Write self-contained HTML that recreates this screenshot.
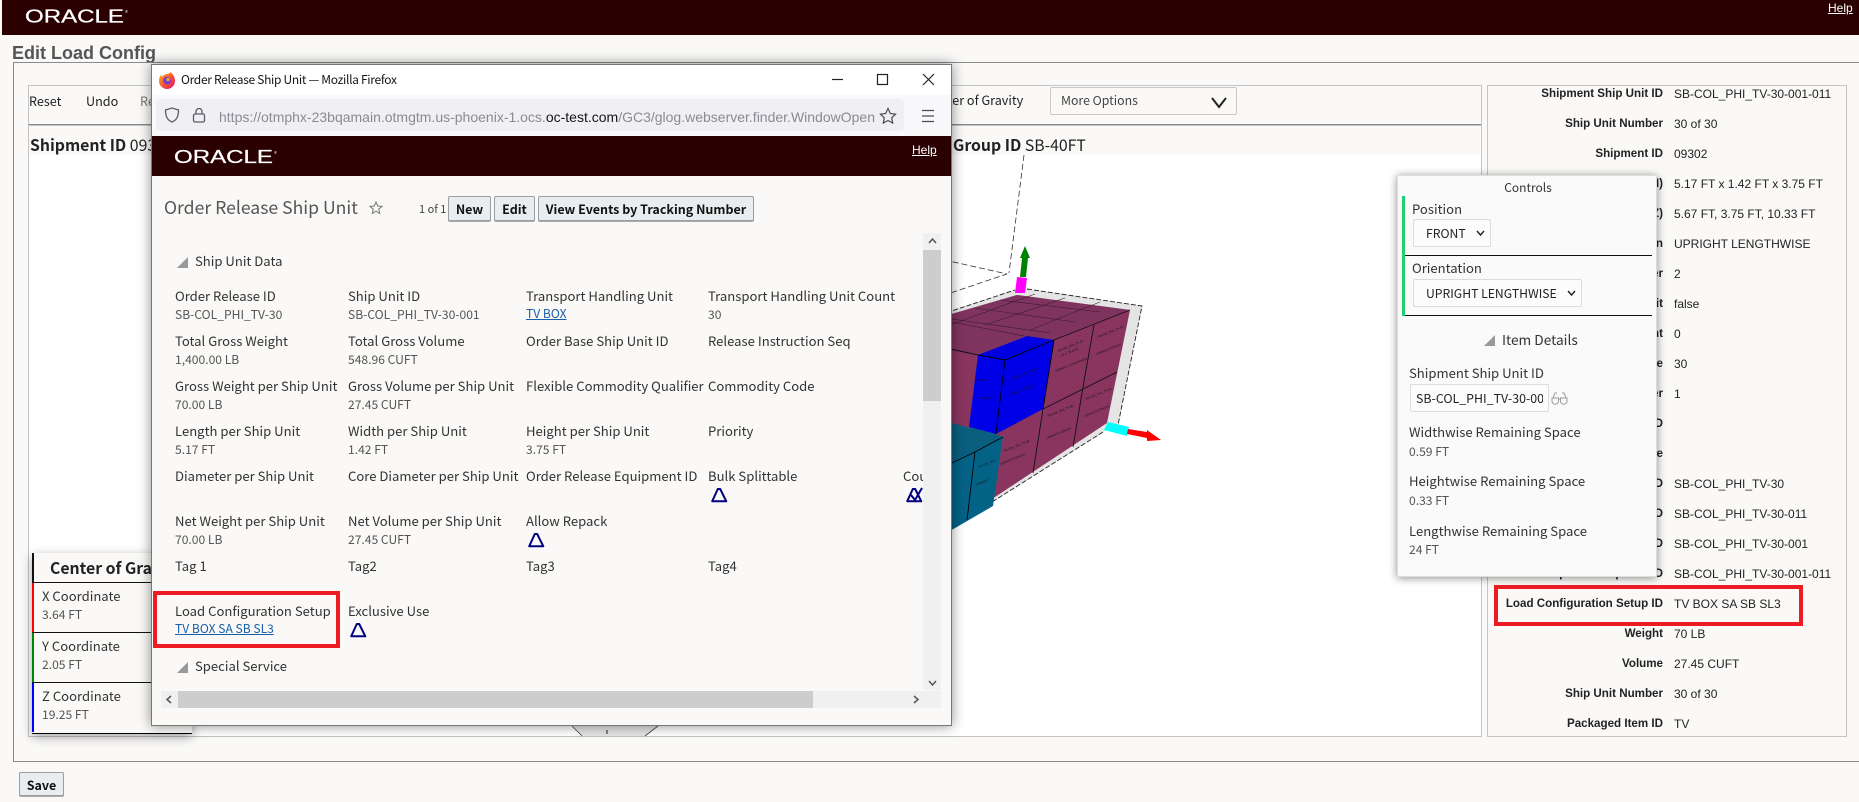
<!DOCTYPE html>
<html><head><meta charset="utf-8"><title>Edit Load Config</title>
<style>
html,body{margin:0;padding:0}
body{width:1859px;height:802px;position:relative;overflow:hidden;background:#faf9f7;font-family:"Noto Sans CJK JP","Liberation Sans",sans-serif;color:#222}
.a{position:absolute}
.t{position:absolute;white-space:nowrap;line-height:20px;font-size:14px}
.l{position:absolute;white-space:nowrap;line-height:20px;font-size:13.1px;color:#333;margin-top:-1px}
.v{position:absolute;white-space:nowrap;line-height:20px;font-size:12.1px;color:#555;margin-top:-1px}
.rl{position:absolute;right:196px;white-space:nowrap;font:bold 11.6px/20px "Liberation Sans",sans-serif;color:#222}
.rv{position:absolute;left:1674px;white-space:nowrap;font:12px/20px "Liberation Sans",sans-serif;color:#222}
.btn{position:absolute;box-sizing:border-box;border:1px solid #9a9fa3;border-radius:2px;background:#eaedef;font:bold 12.5px/23px "Noto Sans CJK JP","Liberation Sans",sans-serif;text-align:center;color:#111;box-shadow:0 1px 0 #aaa}
.sel{position:absolute;box-sizing:border-box;border:1px solid #dcdcdc;border-radius:2px;background:#fcfcfc}
a{color:#1a5fa8;text-decoration:underline}
</style></head><body>

<!-- page chrome -->
<div class="a" style="left:2px;top:0;width:1857px;height:35px;background:#2a0000"></div>
<svg class="a" style="left:20px;top:4px" width="120" height="24"><text x="5" y="18.5" font-family="Liberation Sans" font-size="18" fill="#fff" stroke="#fff" stroke-width=".25" textLength="99" lengthAdjust="spacingAndGlyphs">ORACLE</text><text x="105" y="9" font-family="Liberation Sans" font-size="4" fill="#fff">®</text></svg>
<div class="a" style="left:1828px;top:0;font:12px/17px 'Liberation Sans',sans-serif;color:#fff;text-decoration:underline">Help</div>
<div class="a" style="left:12px;top:43px;font:bold 18px/20px 'Liberation Sans',sans-serif;color:#555;white-space:nowrap">Edit Load Config</div>
<div class="a" style="left:13px;top:62px;width:1860px;height:698px;border:1px solid #8a8a8a"></div>

<!-- toolbar -->
<div class="a" style="left:28px;top:85px;width:1452px;height:38px;border:1px solid #c4c4c4;border-bottom:3px double #8a8a8a;box-sizing:content-box"></div>
<div class="t" style="left:29px;top:91px;font-size:12.6px">Reset</div>
<div class="t" style="left:86px;top:91px;font-size:12.6px">Undo</div>
<div class="t" style="left:140px;top:91px;font-size:12.6px;color:#777">Redo</div>
<div class="t" style="left:925px;top:90px;font-size:12.6px">Center of Gravity</div>
<div class="sel" style="left:1050px;top:87px;width:187px;height:28px;border-color:#c8c8c8;background:#faf9f7"></div>
<div class="t" style="left:1061px;top:90px;font-size:12.3px;color:#444">More Options</div>
<svg class="a" style="left:1210px;top:95px" width="20" height="14"><path d="M2 3 L9 12 L16 3" fill="none" stroke="#222" stroke-width="2"/></svg>

<!-- canvas -->
<div class="a" style="left:28px;top:125px;width:1452px;height:610px;border:1px solid #c4c4c4;background:#fff"></div>
<div class="a" style="left:29px;top:126px;width:1451px;height:29px;background:#faf9f7"></div>
<div class="t" style="left:30px;top:135px;font-size:15.8px;font-weight:bold;color:#222">Shipment ID <span style="font-weight:normal">09302</span></div>
<div class="t" style="left:953px;top:135px;font-size:15.8px;font-weight:bold;color:#222">Group ID <span style="font-weight:normal">SB-40FT</span></div>

<!-- 3D scene -->
<svg class="a" style="left:0;top:0" width="1859" height="802" viewBox="0 0 1859 802">
<g fill="none" stroke="#333" stroke-width=".8" stroke-dasharray="6 3">
<path d="M1024 155 L1009 273"/><path d="M900 250 L1007 274"/><path d="M900 310 L1007 274"/>
</g>
<polygon points="900,328 1015,290 1027,289 1142,306 1118,425 1103,432 900,560" fill="#e4e4e4"/>
<path d="M900 328 L1015 290 M1027 289 L1142 306 L1118 425 M1103 432 L900 560" fill="none" stroke="#222" stroke-width=".9" stroke-dasharray="5 2"/>
<!-- maroon -->
<polygon points="900,329 1017,295 1130,310 1107,423 995,497 900,520" fill="#8a355f"/>
<polygon points="900,329 1017,295 1130,310 1054,340 1024,336 978,355 900,338" fill="#7f3460"/>
<g fill="none" stroke="#111" stroke-width=".9">
<path d="M1130 310 L1054 340 M1094 325 L1083 387 L1073 447 M1117 372 L1043 409 L1033 473"/>
<path d="M900 338 L978 355"/>
</g>
<g fill="none" stroke="#3a1a30" stroke-width=".6">
<path d="M1100 302 L1030 330 M1065 298 L985 325 M1035 294 L950 325 M1000 300 L1100 312 M975 308 L1075 322 M945 318 L1050 333 M952 322 L1024 336"/>
</g>
<!-- blue -->
<polygon points="978,355 1027,336 1054,340 1005,360" fill="#0000e0"/>
<polygon points="1005,360 1054,340 1043,409 996,434" fill="#0000e6"/>
<polygon points="978,355 1005,360 996,434 969,427" fill="#0000e6"/>
<g fill="none" stroke="#000" stroke-width=".9"><path d="M978 355 L1005 360 L1054 340 M1005 360 L996 434 M1054 340 L1043 409"/></g>
<!-- teal -->
<polygon points="900,490 969,427 996,434 1003,437 993,506 900,560" fill="#056287"/>
<polygon points="900,410 952,423 1003,437 975,452 952,463 900,480" fill="#0a5f7e"/>
<g fill="none" stroke="#000" stroke-width=".9"><path d="M952 463 L975 452 L1003 437 M975 452 L967 520"/></g>
<!-- box labels -->
<g font-family="Liberation Sans" font-size="3" fill="#111">
<text transform="translate(1058,352) rotate(-22)">SB-COL_PHI_TV-30</text><text transform="translate(1060,357) rotate(-22)">1 of 2, 30 of 30</text><text transform="translate(1056,372) rotate(-22)">UPRIGHT LENGTHWISE</text>
<text transform="translate(1098,338) rotate(-22)">SB-COL_PHI_TV-30</text><text transform="translate(1097,355) rotate(-22)">UPRIGHT LENGTH</text>
<text transform="translate(1048,417) rotate(-22)">SB-COL_PHI_TV-30</text><text transform="translate(1047,439) rotate(-22)">UPRIGHT LENGTH</text>
<text transform="translate(1086,400) rotate(-22)">SB-COL_PHI_TV-30</text><text transform="translate(1085,417) rotate(-22)">UPRIGHT LENGTH</text>
<text transform="translate(1004,452) rotate(-22)">SB-COL_PHI_TV-30</text><text transform="translate(1001,465) rotate(-22)">UPRIGHT LENGTH</text>
<text transform="translate(1012,380) rotate(-22)">SB-COL_PHI_TV-30</text><text transform="translate(1010,396) rotate(-22)">UPRIGHT LENGTH</text>
<text transform="translate(978,381)">SB-COL</text><text x="979" y="399">UPRIGHT</text>
<text transform="translate(979,468) rotate(-22)">SB-COL_PHI</text><text transform="translate(976,486) rotate(-22)">UPRIGHT</text>
</g>
<!-- axes -->
<polygon points="1017,277 1027,278 1025,293 1015,293" fill="#ff00ff"/>
<polygon points="1020,277 1026,277 1028,258 1030,258 1025,246 1020,258 1022,258" fill="#008000"/>
<polygon points="1108,422 1129,427 1127,436 1104,430" fill="#00ffff"/>
<polygon points="1128,429 1147,432 1147,430 1161,440 1147,441 1147,438 1127,434" fill="#ff0000"/>
<polygon points="572,726 658,726 645,736 582,736" fill="#e4e4e4"/>
<path d="M572 726 L582 736 M658 726 L645 736" stroke="#444" stroke-width=".8"/><path d="M607 730 V734" stroke="#222"/>
</svg>

<!-- center of gravity -->
<div class="a" style="left:32px;top:553px;width:160px;height:180px;background:#faf9f7;box-shadow:0 3px 10px rgba(0,0,0,.35);border-bottom:1px solid #000"></div>
<div class="a" style="left:32px;top:553px;width:2px;height:29px;background:#111"></div>
<div class="a" style="left:32px;top:582px;width:2px;height:50px;background:#f00"></div>
<div class="a" style="left:32px;top:632px;width:2px;height:50px;background:#080"></div>
<div class="a" style="left:32px;top:682px;width:2px;height:50px;background:#00f"></div>
<div class="a" style="left:32px;top:582px;width:160px;height:1px;background:#111"></div>
<div class="a" style="left:32px;top:632px;width:160px;height:1px;background:#111"></div>
<div class="a" style="left:32px;top:682px;width:160px;height:1px;background:#111"></div>
<div class="t" style="left:50px;top:558px;font-size:15.8px;font-weight:bold;color:#222">Center of Gravity</div>
<div class="l" style="left:42px;top:587px">X Coordinate</div><div class="v" style="left:42px;top:606px">3.64 FT</div>
<div class="l" style="left:42px;top:637px">Y Coordinate</div><div class="v" style="left:42px;top:656px">2.05 FT</div>
<div class="l" style="left:42px;top:687px">Z Coordinate</div><div class="v" style="left:42px;top:706px">19.25 FT</div>

<!-- right panel -->
<div class="a" style="left:1487px;top:85px;width:358px;height:650px;border:1px solid #c4c4c4;background:#faf9f7"></div>
<div class="rl" style="top:84px">Shipment Ship Unit ID</div><div class="rv" style="top:84px">SB-COL_PHI_TV-30-001-011</div>
<div class="rl" style="top:114px">Ship Unit Number</div><div class="rv" style="top:114px">30 of 30</div>
<div class="rl" style="top:144px">Shipment ID</div><div class="rv" style="top:144px">09302</div>
<div class="rl" style="top:174px">(L x W x H)</div><div class="rv" style="top:174px">5.17 FT x 1.42 FT x 3.75 FT</div>
<div class="rl" style="top:204px">(X, Y, Z)</div><div class="rv" style="top:204px">5.67 FT, 3.75 FT, 10.33 FT</div>
<div class="rl" style="top:234px">Orientation</div><div class="rv" style="top:234px">UPRIGHT LENGTHWISE</div>
<div class="rl" style="top:264px">Layer</div><div class="rv" style="top:264px">2</div>
<div class="rl" style="top:294px">Fit</div><div class="rv" style="top:294px">false</div>
<div class="rl" style="top:324px">Count</div><div class="rv" style="top:324px">0</div>
<div class="rl" style="top:354px">Size</div><div class="rv" style="top:354px">30</div>
<div class="rl" style="top:384px">Number</div><div class="rv" style="top:384px">1</div>
<div class="rl" style="top:414px">ID</div>
<div class="rl" style="top:444px">Type</div>
<div class="rl" style="top:474px">ID</div><div class="rv" style="top:474px">SB-COL_PHI_TV-30</div>
<div class="rl" style="top:504px">ID</div><div class="rv" style="top:504px">SB-COL_PHI_TV-30-011</div>
<div class="rl" style="top:534px">ID</div><div class="rv" style="top:534px">SB-COL_PHI_TV-30-001</div>
<div class="rl" style="top:564px">Shipment Ship Unit ID</div><div class="rv" style="top:564px">SB-COL_PHI_TV-30-001-011</div>
<div class="rl" style="top:594px">Load Configuration Setup ID</div><div class="rv" style="top:594px">TV BOX SA SB SL3</div>
<div class="rl" style="top:624px">Weight</div><div class="rv" style="top:624px">70 LB</div>
<div class="rl" style="top:654px">Volume</div><div class="rv" style="top:654px">27.45 CUFT</div>
<div class="rl" style="top:684px">Ship Unit Number</div><div class="rv" style="top:684px">30 of 30</div>
<div class="rl" style="top:714px">Packaged Item ID</div><div class="rv" style="top:714px">TV</div>
<div class="a" style="left:1494px;top:585px;width:301px;height:33px;border:4px solid #ed1c24"></div>

<!-- controls panel -->
<div class="a" style="left:1397px;top:175px;width:260px;height:402px;background:#fafafa;box-shadow:0 1px 8px rgba(0,0,0,.45);border:1px solid #ddd;box-sizing:border-box"></div>
<div class="t" style="left:1397px;width:262px;text-align:center;top:178px;font-size:12px;color:#333">Controls</div>
<div class="a" style="left:1402px;top:196px;width:3px;height:120px;background:#1fcf70"></div>
<div class="a" style="left:1405px;top:255px;width:247px;height:1px;background:#111"></div>
<div class="a" style="left:1405px;top:315px;width:247px;height:1px;background:#111"></div>
<div class="l" style="left:1412px;top:200px">Position</div>
<div class="sel" style="left:1413px;top:219px;width:78px;height:28px"></div>
<div class="t" style="left:1426px;top:223px;font-size:12.2px">FRONT</div>
<svg class="a" style="left:1476px;top:229px" width="10" height="8"><path d="M1 2 L4.5 6 L8 2" fill="none" stroke="#222" stroke-width="1.4"/></svg>
<div class="l" style="left:1412px;top:259px">Orientation</div>
<div class="sel" style="left:1413px;top:279px;width:169px;height:28px"></div>
<div class="t" style="left:1426px;top:283px;font-size:12.2px">UPRIGHT LENGTHWISE</div>
<svg class="a" style="left:1567px;top:289px" width="10" height="8"><path d="M1 2 L4.5 6 L8 2" fill="none" stroke="#222" stroke-width="1.4"/></svg>
<svg class="a" style="left:1484px;top:335px" width="12" height="12"><polygon points="11,0 11,11 0,11" fill="#999"/></svg>
<div class="t" style="left:1502px;top:329px;font-size:13.7px;color:#333">Item Details</div>
<div class="l" style="left:1409px;top:364px">Shipment Ship Unit ID</div>
<div class="sel" style="left:1410px;top:384px;width:139px;height:28px"></div>
<div class="t" style="left:1416px;top:388px;width:127px;overflow:hidden;font-size:12.4px">SB-COL_PHI_TV-30-001-011</div>
<svg class="a" style="left:1551px;top:391px" width="17" height="14" fill="none" stroke="#999" stroke-width="1"><path d="M1 7 H7.500 V10 A3 3 0 0 1 1 10 Z M9.500 7 H16 V10 A3 3 0 0 1 9.500 10 Z M2 7 L4 2 H6 M15 7 L13 2 H11 M7.500 8 H9.500"/></svg>
<div class="l" style="left:1409px;top:423px">Widthwise Remaining Space</div><div class="v" style="left:1409px;top:443px">0.59 FT</div>
<div class="l" style="left:1409px;top:472px">Heightwise Remaining Space</div><div class="v" style="left:1409px;top:492px">0.33 FT</div>
<div class="l" style="left:1409px;top:522px">Lengthwise Remaining Space</div><div class="v" style="left:1409px;top:541px">24 FT</div>

<!-- firefox popup -->
<div class="a" style="left:151px;top:64px;width:801px;height:662px;background:#faf9f7;box-shadow:0 0 12px rgba(0,0,0,.45);border:1px solid #777;box-sizing:border-box;overflow:hidden"></div>
<div class="a" style="left:152px;top:65px;width:799px;height:30px;background:#fff"></div>
<div class="a" style="left:152px;top:95px;width:799px;height:40px;background:#f9f9fb"></div>
<div class="a" style="left:156px;top:99px;width:748px;height:32px;border-radius:4px;background:#f0f0f4"></div>
<svg class="a" style="left:158px;top:71px" width="18" height="18" viewBox="0 0 18 18"><defs><linearGradient id="ff" x1="0" y1="0" x2="1" y2="1"><stop offset="0" stop-color="#ffb31a"/><stop offset=".55" stop-color="#f8502f"/><stop offset="1" stop-color="#d9127e"/></linearGradient></defs><path d="M12 1 C15 3 17 6 17 10 A8 8 0 0 1 1 10 C1 7 2 5 3 4 L4 6 C5 4 8 3 10 3 C11 2.500 12 2 12 1Z" fill="url(#ff)"/><circle cx="9" cy="9.500" r="3.800" fill="#6a3bd8"/><circle cx="10" cy="8.500" r="1.800" fill="#f6a02a"/></svg>
<div class="a" style="left:181px;top:71px;font:12px/18px 'Noto Sans CJK JP','Liberation Sans',sans-serif;letter-spacing:-.31px;color:#15141a;white-space:nowrap">Order Release Ship Unit — Mozilla Firefox</div>
<svg class="a" style="left:830px;top:70px" width="110" height="20" fill="none" stroke="#222" stroke-width="1.200"><path d="M2 9.500 H13"/><rect x="47.500" y="4.500" width="10" height="10"/><path d="M93 4 L104 15 M104 4 L93 15"/></svg>
<svg class="a" style="left:164px;top:106px" width="46" height="18" fill="none" stroke="#5b5b66" stroke-width="1.300"><path d="M8 2 L14.500 4 C14.500 10 13 14 8 16 C3 14 1.500 10 1.500 4 Z"/><rect x="29.500" y="8" width="11" height="8" rx="1.500"/><path d="M32 8 V5.500 A3 3 0 0 1 38 5.500 V8"/></svg>
<div class="a" style="left:219px;top:107px;width:656px;overflow:hidden;font:14px/20px 'Liberation Sans',sans-serif;color:#8a8a92;white-space:nowrap">https://otmphx-23bqamain.otmgtm.us-phoenix-1.ocs.<span style="color:#15141a">oc-test.com</span>/GC3/glog.webserver.finder.WindowOpenFramesetServlet</div>
<svg class="a" style="left:879px;top:107px" width="60" height="18" fill="none" stroke="#4a4a52" stroke-width="1.200"><path d="M9 1.500 L11.300 6.500 L16.500 7.200 L12.700 10.800 L13.700 16 L9 13.500 L4.300 16 L5.300 10.800 L1.500 7.200 L6.700 6.500 Z"/><path d="M43 3.500 H55 M43 9 H55 M43 14.500 H55"/></svg>

<div class="a" style="left:152px;top:136px;width:799px;height:40px;background:#2a0000"></div>
<svg class="a" style="left:170px;top:143px" width="120" height="24"><text x="4" y="20" font-family="Liberation Sans" font-size="18" fill="#fff" stroke="#fff" stroke-width=".25" textLength="99" lengthAdjust="spacingAndGlyphs">ORACLE</text><text x="104" y="11" font-family="Liberation Sans" font-size="4" fill="#fff">®</text></svg>
<div class="a" style="left:912px;top:140px;font:12px/20px 'Liberation Sans',sans-serif;color:#fff;text-decoration:underline">Help</div>

<div class="t" style="left:164px;top:198px;font-size:17.6px;color:#555;line-height:20px">Order Release Ship Unit</div>
<svg class="a" style="left:369px;top:201px" width="14" height="14" fill="none" stroke="#777"><path d="M7 1 L8.700 5 L13 5.400 L9.700 8.200 L10.700 12.500 L7 10.200 L3.300 12.500 L4.300 8.200 L1 5.400 L5.300 5 Z"/></svg>
<div class="t" style="left:419px;top:199px;font-size:11px;color:#444">1 of 1</div>
<div class="btn" style="left:448px;top:196px;width:43px;height:25px">New</div>
<div class="btn" style="left:494px;top:196px;width:41px;height:25px">Edit</div>
<div class="btn" style="left:538px;top:196px;width:216px;height:25px">View Events by Tracking Number</div>

<svg class="a" style="left:177px;top:257px" width="12" height="12"><polygon points="11,0 11,11 0,11" fill="#999"/></svg>
<div class="l" style="left:195px;top:252px">Ship Unit Data</div>

<div class="a" style="left:152px;top:236px;width:771px;height:452px;overflow:hidden">
<div style="position:absolute;left:-152px;top:-236px;width:1000px;height:800px">
<div class="l" style="left:175px;top:287px">Order Release ID</div><div class="v" style="left:175px;top:306px">SB-COL_PHI_TV-30</div>
<div class="l" style="left:348px;top:287px">Ship Unit ID</div><div class="v" style="left:348px;top:306px">SB-COL_PHI_TV-30-001</div>
<div class="l" style="left:526px;top:287px">Transport Handling Unit</div><div class="v" style="left:526px;top:305px"><a href="#">TV BOX</a></div>
<div class="l" style="left:708px;top:287px">Transport Handling Unit Count</div><div class="v" style="left:708px;top:306px">30</div>

<div class="l" style="left:175px;top:332px">Total Gross Weight</div><div class="v" style="left:175px;top:351px">1,400.00 LB</div>
<div class="l" style="left:348px;top:332px">Total Gross Volume</div><div class="v" style="left:348px;top:351px">548.96 CUFT</div>
<div class="l" style="left:526px;top:332px">Order Base Ship Unit ID</div>
<div class="l" style="left:708px;top:332px">Release Instruction Seq</div>

<div class="l" style="left:175px;top:377px">Gross Weight per Ship Unit</div><div class="v" style="left:175px;top:396px">70.00 LB</div>
<div class="l" style="left:348px;top:377px">Gross Volume per Ship Unit</div><div class="v" style="left:348px;top:396px">27.45 CUFT</div>
<div class="l" style="left:526px;top:377px">Flexible Commodity Qualifier</div>
<div class="l" style="left:708px;top:377px">Commodity Code</div>

<div class="l" style="left:175px;top:422px">Length per Ship Unit</div><div class="v" style="left:175px;top:441px">5.17 FT</div>
<div class="l" style="left:348px;top:422px">Width per Ship Unit</div><div class="v" style="left:348px;top:441px">1.42 FT</div>
<div class="l" style="left:526px;top:422px">Height per Ship Unit</div><div class="v" style="left:526px;top:441px">3.75 FT</div>
<div class="l" style="left:708px;top:422px">Priority</div>

<div class="l" style="left:175px;top:467px">Diameter per Ship Unit</div>
<div class="l" style="left:348px;top:467px">Core Diameter per Ship Unit</div>
<div class="l" style="left:526px;top:467px">Order Release Equipment ID</div>
<div class="l" style="left:708px;top:467px">Bulk Splittable</div>
<svg class="a" style="left:711px;top:487px" width="17" height="16" fill="none" stroke="#000080" stroke-width="2" stroke-linejoin="round"><path d="M6.800 2 H9.200 L15.300 14.300 H1.200 Z"/></svg>
<div class="l" style="left:903px;top:467px">Count</div>
<svg class="a" style="left:906px;top:487px" width="17" height="16" fill="none" stroke="#000080" stroke-width="2" stroke-linejoin="round"><path d="M6.800 2 H9.200 L15.300 14.300 H1.200 Z M5 8 L9 13 L16 1"/></svg>

<div class="l" style="left:175px;top:512px">Net Weight per Ship Unit</div><div class="v" style="left:175px;top:531px">70.00 LB</div>
<div class="l" style="left:348px;top:512px">Net Volume per Ship Unit</div><div class="v" style="left:348px;top:531px">27.45 CUFT</div>
<div class="l" style="left:526px;top:512px">Allow Repack</div>
<svg class="a" style="left:528px;top:532px" width="17" height="16" fill="none" stroke="#000080" stroke-width="2" stroke-linejoin="round"><path d="M6.800 2 H9.200 L15.300 14.300 H1.200 Z"/></svg>

<div class="l" style="left:175px;top:557px">Tag 1</div>
<div class="l" style="left:348px;top:557px">Tag2</div>
<div class="l" style="left:526px;top:557px">Tag3</div>
<div class="l" style="left:708px;top:557px">Tag4</div>

<div class="l" style="left:175px;top:602px">Load Configuration Setup</div><div class="v" style="left:175px;top:620px"><a href="#">TV BOX SA SB SL3</a></div>
<div class="l" style="left:348px;top:602px">Exclusive Use</div>
<svg class="a" style="left:350px;top:622px" width="17" height="16" fill="none" stroke="#000080" stroke-width="2" stroke-linejoin="round"><path d="M6.800 2 H9.200 L15.300 14.300 H1.200 Z"/></svg>

<svg class="a" style="left:177px;top:662px" width="12" height="12"><polygon points="11,0 11,11 0,11" fill="#999"/></svg>
<div class="l" style="left:195px;top:657px">Special Service</div>
<div class="a" style="left:171px;top:688px;width:743px;height:10px;border:1px solid #cfdbe4"></div>
</div></div>
<div class="a" style="left:153px;top:591px;width:179px;height:49px;border:4px solid #ed1c24"></div>

<!-- popup scrollbars -->
<div class="a" style="left:923px;top:233px;width:18px;height:457px;background:#f0f0f0"></div>
<div class="a" style="left:923px;top:250px;width:18px;height:151px;background:#cdcdcd"></div>
<svg class="a" style="left:928px;top:237px" width="9" height="8" fill="none" stroke="#555" stroke-width="1.500"><path d="M1 6 L4.500 2 L8 6"/></svg>
<svg class="a" style="left:928px;top:679px" width="9" height="8" fill="none" stroke="#555" stroke-width="1.500"><path d="M1 2 L4.500 6 L8 2"/></svg>
<div class="a" style="left:161px;top:691px;width:780px;height:17px;background:#f0f0f0"></div>
<div class="a" style="left:178px;top:691px;width:635px;height:17px;background:#cdcdcd"></div>
<svg class="a" style="left:165px;top:695px" width="8" height="9" fill="none" stroke="#555" stroke-width="1.500"><path d="M6 1 L2 4.500 L6 8"/></svg>
<svg class="a" style="left:912px;top:695px" width="8" height="9" fill="none" stroke="#555" stroke-width="1.500"><path d="M2 1 L6 4.500 L2 8"/></svg>

<div class="btn" style="left:19px;top:772px;width:45px;height:24px">Save</div>
</body></html>
